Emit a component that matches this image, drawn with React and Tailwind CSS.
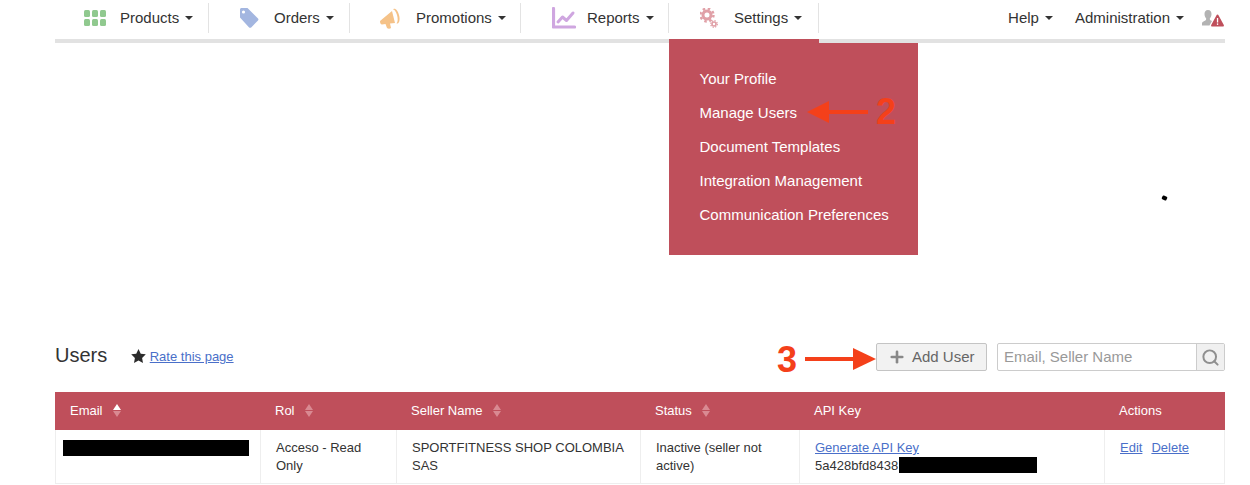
import { Search, Plus } from 'lucide-react'

const RED = 'bg-[#bf4f5b]'

function Caret({ className = 'border-t-[#333]' }) {
  return <span className={`inline-block w-0 h-0 border-x-[4px] border-x-transparent border-t-[4px] ${className}`} />
}

function SortArrows({ active }) {
  return (
    <span className="inline-flex flex-col gap-[1px] ml-[10px] align-middle relative top-[-1px]">
      <span className={`w-0 h-0 border-x-[4px] border-x-transparent border-b-[6px] ${active ? 'border-b-white' : 'border-b-[#d98a92]'}`} />
      <span className="w-0 h-0 border-x-[4px] border-x-transparent border-t-[6px] border-t-[#d98a92]" />
    </span>
  )
}

const GridIcon = () => (
  <svg width="22" height="16" viewBox="0 0 22 16" fill="#90c98f">
    <rect x="0" y="0" width="6" height="7" rx="1.5" />
    <rect x="8" y="0" width="6" height="7" rx="1.5" />
    <rect x="16" y="0" width="6" height="7" rx="1.5" />
    <rect x="0" y="9" width="6" height="7" rx="1.5" />
    <rect x="8" y="9" width="6" height="7" rx="1.5" />
    <rect x="16" y="9" width="6" height="7" rx="1.5" />
  </svg>
)

const TagIcon = () => (
  <svg width="20" height="20" viewBox="0 0 20 20">
    <path fill="#a3b6e0" d="M1 1.5 C1 .7 1.7 0 2.5 0 H8.5 L19 10.5 C19.6 11.2 19.6 12 19 12.6 L12.2 19.4 C11.6 20 10.7 20 10.1 19.4 L1 9.5 Z" />
    <circle cx="4.5" cy="4" r="1.6" fill="#fff" />
  </svg>
)

const MegaphoneIcon = () => (
  <svg width="21" height="21" viewBox="0 0 21 21">
    <path fill="#f5c288" d="M0 13 L12 3 L15 15 L10 15.5 L11 20 C10 21 8 21 7 20 L5.500 16 L2 16.500 C.7 16.500 0 15 0 13 Z" />
    <path fill="#f5c288" d="M13.500 1 C15.500 0 18 3 19 7 C20.200 11 19.500 15 17.500 15.500 L16.500 15.500 C18 14 18 10.500 17 7 C16 3.500 14.500 1.500 13 1.500 Z" />
  </svg>
)

const ChartIcon = () => (
  <svg width="24" height="22" viewBox="0 0 24 22" fill="none" stroke="#cfa6e0" strokeWidth="3" strokeLinecap="round" strokeLinejoin="round">
    <path d="M1.500 1.500 V20 H22.500" strokeWidth="3.200" />
    <path d="M6 15 L10.500 10 L14.500 13.500 L21 6" />
  </svg>
)

const GearsIcon = () => (
  <svg width="18" height="20" viewBox="0 0 18 20" fill="none" stroke="#e0a0a7">
    <circle cx="7" cy="7" r="4" strokeWidth="3" />
    <circle cx="7" cy="7" r="6.500" strokeWidth="2.400" strokeDasharray="2.500 2.600" />
    <circle cx="14" cy="16" r="2" strokeWidth="1.600" />
    <circle cx="14" cy="16" r="3.300" strokeWidth="1.300" strokeDasharray="1.300 1.300" />
  </svg>
)

const UserAlertIcon = () => (
  <svg width="22" height="17" viewBox="0 0 22 17">
    <path fill="#b3b3b3" d="M6 0 C8.500 0 9.500 2 9.500 4 C9.500 6 8.500 7.500 7.800 8.500 L8 10 L10 11 L7.500 15.500 H0 V13.500 C0 11.500 3 11 4 10 L4.200 8.500 C3.500 7.500 2.500 6 2.500 4 C2.500 2 3.500 0 6 0 Z" />
    <path fill="#bf4f5b" d="M15.500 4.500 C16 4.500 16.300 4.800 16.500 5.200 L21.800 15 C22.100 15.800 21.700 16.500 21 16.500 H10 C9.300 16.500 8.900 15.800 9.200 15 L14.500 5.200 C14.700 4.800 15 4.500 15.500 4.500 Z" />
    <rect x="14.900" y="8" width="1.300" height="4.500" fill="#fff" />
    <rect x="14.900" y="13.400" width="1.300" height="1.500" fill="#fff" />
  </svg>
)

const navItems = [
  { label: 'Products', icon: <GridIcon />, width: 'w-[154px]', pad: 'pl-[29px]', gap: 'w-[36px]' },
  { label: 'Orders', icon: <TagIcon />, width: 'w-[141px]', pad: 'pl-[30px]', gap: 'w-[35px]' },
  { label: 'Promotions', icon: <MegaphoneIcon />, width: 'w-[171px]', pad: 'pl-[30px]', gap: 'w-[36px]' },
  { label: 'Reports', icon: <ChartIcon />, width: 'w-[148px]', pad: 'pl-[31px]', gap: 'w-[35px]' },
  { label: 'Settings', icon: <GearsIcon />, width: 'w-[150px]', pad: 'pl-[31px]', gap: 'w-[34px]' },
]

const menuItems = ['Your Profile', 'Manage Users', 'Document Templates', 'Integration Management', 'Communication Preferences']

export default function App() {
  return (
    <div className="relative h-[485px] w-[1250px] overflow-hidden bg-white pl-[55px] pr-[25px] text-[#333] font-['Liberation_Sans',Arial,sans-serif]">
      {/* Top nav */}
      <div className="flex justify-between h-[39px] text-[15px]">
        <div className="flex pt-[3px]">
          {navItems.map((item) => (
            <div key={item.label} className={`flex items-center h-[30px] border-r border-[#e3e3e3] ${item.width} ${item.pad}`}>
              <span className={`flex items-center ${item.gap}`}>{item.icon}</span>
              <span>{item.label}</span>
              <span className="ml-[6px] flex"><Caret /></span>
            </div>
          ))}
        </div>
        <div className="flex items-center h-[36px] pr-[1px]">
          <span>Help</span>
          <span className="ml-[6px] flex"><Caret /></span>
          <span className="ml-[22px]">Administration</span>
          <span className="ml-[6px] flex"><Caret /></span>
          <span className="ml-[18px] flex"><UserAlertIcon /></span>
        </div>
      </div>
      <div className="h-[4px] bg-[#e2e2e2]" />

      {/* Settings dropdown */}
      <div className={`absolute left-[669px] top-[39px] w-[150px] h-[4px] ${RED}`} />
      <div className={`absolute left-[669px] top-[43px] w-[249px] h-[212px] ${RED} pt-[19px] pl-[30.5px] text-[15px] text-white`}>
        {menuItems.map((m) => (
          <div key={m} className="h-[34px] leading-[34px]">{m}</div>
        ))}
      </div>

      {/* Annotations */}
      <div className="absolute left-[807px] top-[101px] flex items-center">
        <span className="w-0 h-0 border-y-[11px] border-y-transparent border-r-[22px] border-r-[#f4401a]" />
        <span className="w-[39px] h-[4px] bg-[#f4401a]" />
      </div>
      <span className="absolute left-[876px] top-[90px] text-[36px] leading-[43px] font-bold text-[#f4401a]">2</span>
      <span className="absolute left-[777px] top-[338px] text-[36px] leading-[43px] font-bold text-[#f4401a]">3</span>
      <div className="absolute left-[805px] top-[348px] flex items-center">
        <span className="w-[48px] h-[4px] bg-[#f4401a]" />
        <span className="w-0 h-0 border-y-[11px] border-y-transparent border-l-[23px] border-l-[#f4401a]" />
      </div>
      <span className="absolute left-[1162px] top-[196px] w-[5px] h-[4px] rotate-[25deg] rounded-[1px] bg-black" />

      {/* Title row */}
      <div className="flex items-center justify-between mt-[300px] h-[28px]">
        <div className="flex items-center">
          <span className="text-[20px] leading-[24px] relative top-[-2px]">Users</span>
          <svg className="ml-[24px] relative top-[-1px]" width="15" height="14" viewBox="0 0 24 23" fill="#2c2c2c">
            <path d="M12 0 L15.700 7.700 L24 8.800 L17.900 14.600 L19.400 23 L12 18.900 L4.600 23 L6.100 14.600 L0 8.800 L8.300 7.700 Z" />
          </svg>
          <a className="ml-[3.5px] text-[13px] text-[#4a6fc9] underline">Rate this page</a>
        </div>
        <div className="flex items-center">
          <div className="flex items-center w-[111px] h-[28px] pl-[11px] rounded-[2px] border border-[#c4c4c4] bg-[#f2f2f2] text-[15px] text-[#666]">
            <Plus size={18} strokeWidth={3.500} className="text-[#888]" />
            <span className="ml-[6px]">Add User</span>
          </div>
          <div className="flex ml-[10px] w-[228px] h-[28px] rounded-[2px] border border-[#ccc]">
            <span className="flex-1 pl-[6px] leading-[26px] text-[15px] text-[#999]">Email, Seller Name</span>
            <span className="flex items-center justify-center w-[28px] border-l border-[#ccc] bg-[#f0f0f0]">
              <Search size={19} strokeWidth={2.500} className="text-[#8f8f8f]" />
            </span>
          </div>
        </div>
      </div>

      {/* Users table */}
      <table className="mt-[21px] w-[1170px] table-fixed border-separate border-spacing-0 text-[13px] leading-[18px]">
        <thead>
          <tr className={`${RED} h-[38px] text-white text-left`}>
            <th className="w-[205px] pl-[15px] font-normal">Email<SortArrows active /></th>
            <th className="w-[136px] pl-[15px] font-normal">Rol<SortArrows /></th>
            <th className="w-[244px] pl-[15px] font-normal">Seller Name<SortArrows /></th>
            <th className="w-[159px] pl-[15px] font-normal">Status<SortArrows /></th>
            <th className="w-[305px] pl-[15px] font-normal">API Key</th>
            <th className="w-[121px] pl-[15px] font-normal">Actions</th>
          </tr>
        </thead>
        <tbody>
          <tr className="h-[54px] align-top">
            <td className="border-l border-b border-[#eee] pl-[7px] pt-[10px]">
              <div className="w-[186px] h-[16px] bg-black" />
            </td>
            <td className="border-l border-b border-[#eee] pl-[15px] pr-[15px] pt-[9px]">Acceso - Read Only</td>
            <td className="border-l border-b border-[#eee] pl-[15px] pr-[15px] pt-[9px]">SPORTFITNESS SHOP COLOMBIA SAS</td>
            <td className="border-l border-b border-[#eee] pl-[15px] pr-[15px] pt-[9px]">Inactive (seller not active)</td>
            <td className="border-l border-b border-[#eee] pl-[15px] pt-[9px]">
              <a className="block text-[#4a6fc9] underline">Generate API Key</a>
              <div className="flex items-start">
                <span>5a428bfd8438</span>
                <span className="ml-[1px] w-[138px] h-[16px] bg-black" />
              </div>
            </td>
            <td className="border-x border-b border-[#eee] pl-[15px] pt-[9px]">
              <a className="text-[#4a6fc9] underline">Edit</a>
              <a className="ml-[9px] text-[#4a6fc9] underline">Delete</a>
            </td>
          </tr>
        </tbody>
      </table>
    </div>
  )
}
